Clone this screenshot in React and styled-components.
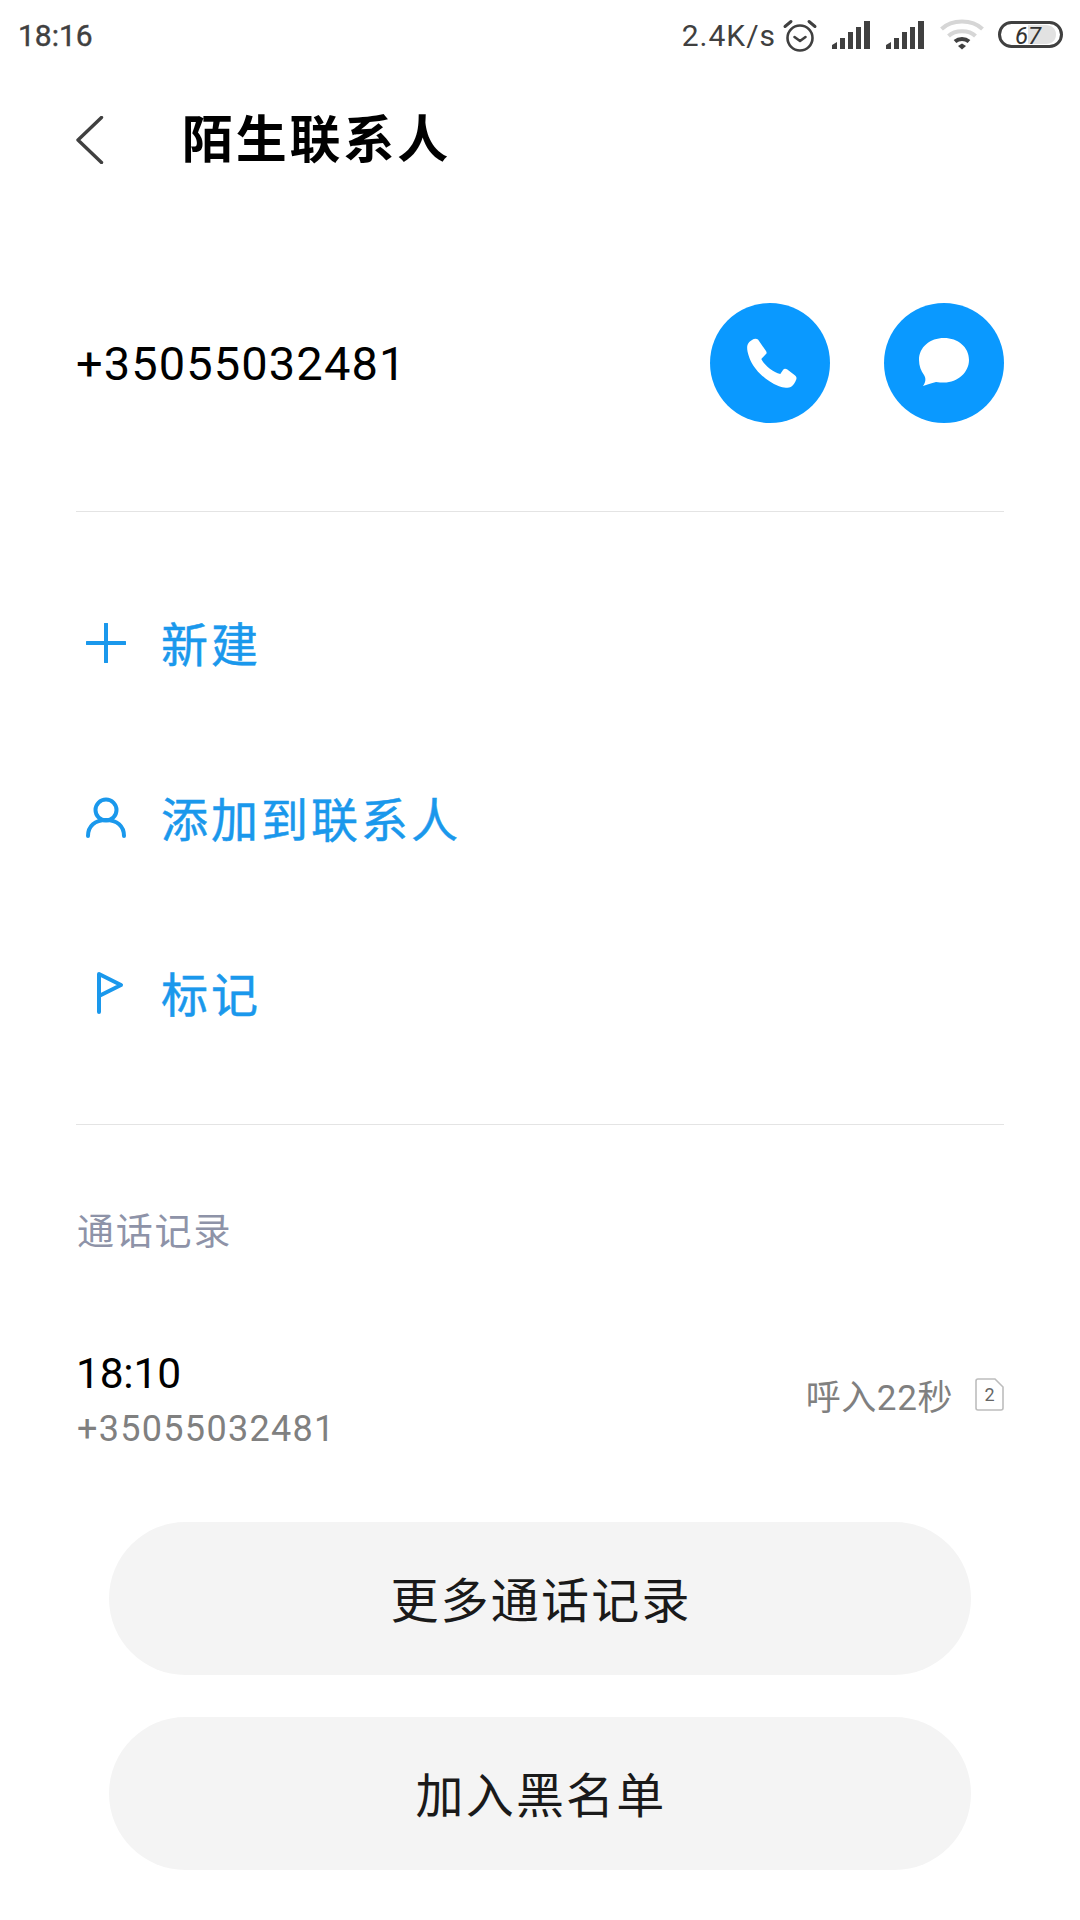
import React from "react";
import styled, { createGlobalStyle } from "styled-components";

const FONT = 'Roboto, "Noto Sans CJK SC", sans-serif';
const BLUE = "#1a98ec";

const Global = createGlobalStyle`
  html, body { margin: 0; padding: 0; background: #fff; }
  * { box-sizing: border-box; }
`;
const Page = styled.div`
  width: 1080px; height: 1920px; background: #fff; font-family: ${FONT};
  display: flex; flex-direction: column; overflow: hidden;
`;
const StatusBar = styled.div`
  height: 70px; padding: 0 16px 0 18px; display: flex; align-items: center;
  justify-content: space-between; color: #404040;
`;
const Clock = styled.span`font-size: 30px; -webkit-text-stroke: 0.4px #404040; line-height: 70px; margin-top: 2px;`;
const StatusRight = styled.div`display: flex; align-items: center;`;
const Speed = styled.span`font-size: 30px; letter-spacing: 1px; margin-right: 6px;`;
const Spacer = styled.span`width: ${(p) => p.$w}px; flex: none;`;
const Header = styled.div`
  height: 140px; padding-left: 76px; display: flex; align-items: center;
`;
const Title = styled.h1`
  margin: 0 0 0 78px; font-size: 51px; font-weight: 700; color: #000; letter-spacing: 2.8px; line-height: 1;
`;
const ContactRow = styled.div`
  height: 302px; margin: 0 76px; display: flex; align-items: center; justify-content: space-between;
  border-bottom: 1px solid #e4e4e4;
`;
const Number = styled.span`font-size: 47px; color: #000; letter-spacing: 1.1px; margin-top: 6px;`;
const RoundGroup = styled.div`display: flex; gap: 54px; margin-top: 4px;`;
const RoundButton = styled.div`
  width: 120px; height: 120px; border-radius: 50%; background: #0a99ff;
  display: flex; align-items: center; justify-content: center;
`;
const PhoneSvg = styled.svg`margin-left: 4px;`;
const Actions = styled.div`
  margin: 0 76px; padding-top: 42px; height: 613px; border-bottom: 1px solid #e4e4e4;
  display: flex; flex-direction: column;
`;
const ActionRow = styled.div`
  height: 175px; display: flex; align-items: center; color: ${BLUE};
  font-size: 47px; -webkit-text-stroke: 0.5px ${BLUE}; letter-spacing: 3px;
`;
const ActionIcon = styled.span`
  width: 85px; display: flex; padding: 2px 0 0 10px; align-items: center; flex: none;
`;
const SectionLabel = styled.div`
  margin: 0 76px 0 77px; padding-top: 81px; font-size: 37px; line-height: 54px; color: #8e93a8; letter-spacing: 1.8px;
`;
const CallRow = styled.div`
  margin: 0 76px; padding-top: 85px; height: 262px; display: flex; align-items: flex-start; justify-content: space-between;
`;
const CallLeft = styled.div`display: flex; flex-direction: column;`;
const CallTime = styled.span`font-size: 42.5px; line-height: 58px; color: #000; letter-spacing: -0.2px;`;
const CallNumber = styled.span`font-size: 36px; line-height: 52px; color: #808080; letter-spacing: 1.3px; margin-left: 1px;`;
const CallRight = styled.div`display: flex; align-items: center; gap: 22px; margin-top: 24px;`;
const CallInfo = styled.span`font-size: 35px; color: #808080; letter-spacing: 0.6px;`;
const SimTag = styled.span`
  position: relative; width: 29px; height: 33px; display: flex; align-items: center; justify-content: center;
  font-size: 18px; color: #666;
`;
const SimOutline = styled.svg`position: absolute; inset: 0;`;
const Buttons = styled.div`
  display: flex; flex-direction: column; gap: 42px; padding: 0 109px;
`;
const PillButton = styled.div`
  height: 153px; border-radius: 77px; background: #f4f4f4; color: #1a1a1a;
  display: flex; align-items: center; justify-content: center;
  font-size: 48px; letter-spacing: 2.2px;
  padding: 0 0 4px 2px;
`;

const Alarm = () => (
  <svg width="36" height="36" viewBox="0 0 36 36" fill="none" stroke="#404040" strokeWidth="2.6" strokeLinecap="round" strokeLinejoin="round">
    <circle cx="18" cy="21" r="12.5" />
    <path d="M12.5 20l5.5 4 5.5-4" />
    <path d="M3 9.5L9 4.5M33 9.5L27 4.5" strokeWidth="3" />
  </svg>
);
const Signal = () => (
  <svg width="40" height="30" viewBox="0 0 40 30" fill="#404040">
    <path d="M0 29v-4l5-3v7zM8 29V18h5v11zM16 29V12h5v17zM24 29V7h5v22zM32 29V1h6v28z" />
  </svg>
);
const Wifi = () => (
  <svg width="44" height="32" viewBox="0 0 44 32" fill="none" strokeLinecap="butt">
    <path d="M1.5 10C12 0 32 0 42.5 10" stroke="#d6d6d6" strokeWidth="4" />
    <path d="M8.5 17C15 10.5 29 10.5 35.5 17" stroke="#d6d6d6" strokeWidth="4" />
    <path d="M15 22.5C19 19 25 19 29 22.5" stroke="#404040" strokeWidth="4" />
    <path d="M18 27l4-2.5 4 2.5-4 3.5z" fill="#404040" />
  </svg>
);
const Battery = () => (
  <svg width="66" height="30" viewBox="0 0 66 30">
    <rect x="1.5" y="2.5" width="62" height="24" rx="12" fill="#fff" stroke="#404040" strokeWidth="3" />
    <path d="M30 5h18c6 0 10 4 10 9.500S54 24 48 24H30z" fill="#e2e2e2" />
    <text x="30" y="23.500" textAnchor="middle" fontSize="24" fontFamily="Roboto" fontStyle="italic" fill="#333">67</text>
  </svg>
);
const Back = () => (
  <svg width="28" height="48" viewBox="0 0 28 48" fill="none" stroke="#404040" strokeWidth="3.4" strokeLinecap="round" strokeLinejoin="round">
    <path d="M25.5 1.5L2 24l23.500 22.500" />
  </svg>
);
const Phone = () => (
  <PhoneSvg width="50" height="50" viewBox="0 0 50 50" fill="#fff">
    <path d="M5 2C7 .5 9.500.2 11 1.500L19 13C20 14.500 19.800 15.500 18.500 16.500L14.300 21C17 27 26 34.500 33.300 36L36 32C37 30.500 38.500 30.500 40 31.300L47.500 37C49.500 38.500 50 40 49 42C47.500 46 45 49 42 49.500C38 50.200 35 49.500 32 48.300C24 45 18 40.500 13.300 36C7 29.500 3.500 24 1.700 17.700C.3 13.500-.3 9.500.5 7C1.200 4.800 3 3.200 5 2z" />
  </PhoneSvg>
);
const Bubble = () => (
  <svg width="52" height="50" viewBox="0 0 52 50" fill="#fff">
    <path d="M26 0C12 0 1 9 1 22C1 28 3 33 6 37C8 40 8 44 5 48C9 47 13 45 18 44C21 44.500 23 44.500 26 44.500C40 44.500 51 34 51 22C51 9 40 0 26 0z" />
  </svg>
);
const Plus = () => (
  <svg width="40" height="40" viewBox="0 0 40 40" stroke={BLUE} strokeWidth="4" strokeLinecap="round">
    <path d="M20 1v38M1 20h38" />
  </svg>
);
const Person = () => (
  <svg width="40" height="42" viewBox="0 0 40 42" fill="none" stroke={BLUE} strokeWidth="4" strokeLinecap="round">
    <circle cx="20" cy="13" r="10.500" />
    <path d="M2 39c0-10 7-16 18-16s18 6 18 16" />
  </svg>
);
const Flag = () => (
  <svg width="40" height="42" viewBox="0 0 40 42" fill="none" stroke={BLUE} strokeWidth="4" strokeLinecap="round" strokeLinejoin="round">
    <path d="M13 40V2l22 11-22 11" />
  </svg>
);

export default function App() {
  return (
    <Page>
      <Global />
      <StatusBar>
        <Clock>18:16</Clock>
        <StatusRight>
          <Speed>2.4K/s</Speed>
          <Alarm />
          <Spacer $w={14} />
          <Signal />
          <Spacer $w={14} />
          <Signal />
          <Spacer $w={14} />
          <Wifi />
          <Spacer $w={14} />
          <Battery />
        </StatusRight>
      </StatusBar>
      <Header>
        <Back />
        <Title>陌生联系人</Title>
      </Header>
      <ContactRow>
        <Number>+35055032481</Number>
        <RoundGroup>
          <RoundButton><Phone /></RoundButton>
          <RoundButton><Bubble /></RoundButton>
        </RoundGroup>
      </ContactRow>
      <Actions>
        <ActionRow><ActionIcon><Plus /></ActionIcon>新建</ActionRow>
        <ActionRow><ActionIcon><Person /></ActionIcon>添加到联系人</ActionRow>
        <ActionRow><ActionIcon><Flag /></ActionIcon>标记</ActionRow>
      </Actions>
      <SectionLabel>通话记录</SectionLabel>
      <CallRow>
        <CallLeft>
          <CallTime>18:10</CallTime>
          <CallNumber>+35055032481</CallNumber>
        </CallLeft>
        <CallRight>
          <CallInfo>呼入22秒</CallInfo>
          <SimTag>
            <SimOutline width="29" height="33" viewBox="0 0 29 33" fill="none" stroke="#bdbdbd" strokeWidth="1.6">
              <path d="M1 3a2 2 0 0 1 2-2h17l8 8v21a2 2 0 0 1-2 2H3a2 2 0 0 1-2-2z" />
            </SimOutline>
            2
          </SimTag>
        </CallRight>
      </CallRow>
      <Buttons>
        <PillButton>更多通话记录</PillButton>
        <PillButton>加入黑名单</PillButton>
      </Buttons>
    </Page>
  );
}
